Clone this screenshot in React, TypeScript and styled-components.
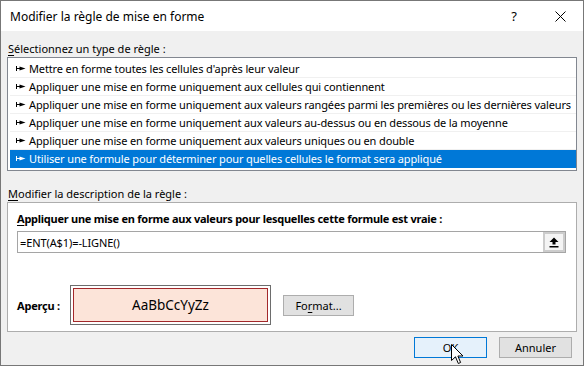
import styled, { createGlobalStyle } from "styled-components"

const rules = [
  "Mettre en forme toutes les cellules d'après leur valeur",
  "Appliquer une mise en forme uniquement aux cellules qui contiennent",
  "Appliquer une mise en forme uniquement aux valeurs rangées parmi les premières ou les dernières valeurs",
  "Appliquer une mise en forme uniquement aux valeurs au-dessus ou en dessous de la moyenne",
  "Appliquer une mise en forme uniquement aux valeurs uniques ou en double",
  "Utiliser une formule pour déterminer pour quelles cellules le format sera appliqué",
]

function RuleArrow() {
  return (
    <svg width="10" height="7" viewBox="0 0 10 7" fill="currentColor" style={{ flex: "none" }}>
      <rect x="0" y="1" width="1" height="5" />
      <rect x="1" y="3" width="4" height="1" />
      <polygon points="3.5,1.5 9.5,3.5 3.5,5.5" />
    </svg>
  )
}

function CloseIcon() {
  return (
    <svg width="11" height="11" viewBox="0 0 11 11" stroke="#000" strokeWidth="1">
      <line x1="0.5" y1="0.5" x2="10.5" y2="10.5" />
      <line x1="10.5" y1="0.5" x2="0.5" y2="10.5" />
    </svg>
  )
}

function CollapseIcon() {
  return (
    <svg width="10" height="11" viewBox="0 0 10 11" fill="#000">
      <polygon points="5,0.5 9.5,5 6.5,5 6.5,7.5 3.5,7.5 3.5,5 0.5,5" />
      <rect x="0.5" y="9" width="9" height="1.5" />
    </svg>
  )
}

function Cursor() {
  return (
    <svg width="13" height="21" viewBox="0 0 13 21">
      <path
        d="M0.5 0.5 L0.5 16.5 L4.5 12.8 L7.3 19.5 L9.6 18.5 L6.9 12 L12 12 Z"
        fill="#fff"
        stroke="#000"
        strokeWidth="1"
      />
    </svg>
  )
}

function App() {
  return (
    <>
      <GlobalStyle />
      <Window>
        <TitleBar>
          <Title>Modifier la règle de mise en forme</Title>
          <TitleButton>?</TitleButton>
          <TitleButton>
            <CloseIcon />
          </TitleButton>
        </TitleBar>

        <Body>
          <SectionLabel>
            <u>S</u>électionnez un type de règle :
          </SectionLabel>
          <RuleList>
            {rules.map((rule, i) => (
              <RuleRow key={rule} $selected={i === rules.length - 1}>
                <RuleArrow />
                <span>{rule}</span>
              </RuleRow>
            ))}
          </RuleList>

          <SectionLabel $gap={14}>
            <u>M</u>odifier la description de la règle :
          </SectionLabel>
          <DescriptionBox>
            <BoldLabel>
              <u>A</u>ppliquer une mise en forme aux valeurs pour lesquelles cette formule est vraie :
            </BoldLabel>
            <FormulaField>
              <FormulaText>=ENT(A$1)=-LIGNE()</FormulaText>
              <CollapseButton>
                <CollapseIcon />
              </CollapseButton>
            </FormulaField>
            <PreviewRow>
              <PreviewLabel>Aperçu :</PreviewLabel>
              <PreviewFrame>
                <PreviewSample>AaBbCcYyZz</PreviewSample>
              </PreviewFrame>
              <DialogButton $width={71}>
                Fo<u>r</u>mat...
              </DialogButton>
            </PreviewRow>
          </DescriptionBox>
        </Body>

        <Footer>
          <DialogButton $primary>OK</DialogButton>
          <DialogButton>Annuler</DialogButton>
        </Footer>

        <CursorLayer>
          <Cursor />
        </CursorLayer>
      </Window>
    </>
  )
}

const GlobalStyle = createGlobalStyle`
  html, body {
    margin: 0;
    padding: 0;
    background: #ffffff;
  }
  body {
    font-family: "Noto Sans", "Open Sans", sans-serif;
    font-size: 11px;
    color: #000;
  }
  u {
    text-decoration-thickness: 1px;
    text-underline-offset: 2px;
  }
`

const Window = styled.div`
  position: relative;
  width: 584px;
  height: 366px;
  box-sizing: border-box;
  border: 1px solid #777777;
  background: #f0f0f0;
  display: flex;
  flex-direction: column;
  overflow: hidden;
`

const TitleBar = styled.div`
  height: 30px;
  flex: none;
  background: #ffffff;
  display: flex;
  align-items: center;
  padding-left: 9px;
`

const Title = styled.div`
  flex: 1;
  font-size: 12px;
`

const TitleButton = styled.div`
  width: 46px;
  height: 30px;
  display: flex;
  align-items: center;
  justify-content: center;
  font-size: 13px;
`

const Body = styled.div`
  padding: 9px 6px 0 6px;
`

const SectionLabel = styled.div<{ $gap?: number }>`
  margin-top: ${(p) => p.$gap ?? 0}px;
  height: 17px;
  line-height: 17px;
  padding-left: 1px;
`

const RuleList = styled.div`
  background: #ffffff;
  border: 1px solid #828790;
  padding: 2px 0 2px 2px;
`

const RuleRow = styled.div<{ $selected?: boolean }>`
  height: 18px;
  box-sizing: border-box;
  display: flex;
  align-items: center;
  gap: 3px;
  padding-left: 6px;
  white-space: nowrap;
  overflow: hidden;
  letter-spacing: -0.13px;
  border-bottom: 1px solid ${(p) => (p.$selected ? "#0078d7" : "#f0f0f0")};
  background: ${(p) => (p.$selected ? "#0078d7" : "transparent")};
  color: ${(p) => (p.$selected ? "#ffffff" : "#000000")};
`

const DescriptionBox = styled.div`
  height: 130px;
  box-sizing: border-box;
  background: #ffffff;
  border: 1px solid #adadad;
  padding: 7px 10px 0 9px;
`

const BoldLabel = styled.div`
  font-weight: 700;
  height: 17px;
  line-height: 17px;
  white-space: nowrap;
  letter-spacing: -0.25px;
`

const FormulaField = styled.div`
  margin-top: 4px;
  height: 22px;
  box-sizing: border-box;
  border: 1px solid #a5a5a5;
  display: flex;
  align-items: center;
  padding-left: 2px;
`

const FormulaText = styled.span`
  flex: 1;
  letter-spacing: -0.1px;
`

const CollapseButton = styled.div`
  width: 22px;
  height: 20px;
  box-sizing: border-box;
  border: 2px solid #cccccc;
  background: #f4f4f4;
  display: flex;
  align-items: center;
  justify-content: center;
`

const PreviewRow = styled.div`
  margin-top: 32px;
  display: flex;
  align-items: center;
`

const PreviewLabel = styled.div`
  width: 53px;
  font-weight: 700;
  letter-spacing: -0.2px;
`

const PreviewFrame = styled.div`
  width: 201px;
  height: 40px;
  box-sizing: border-box;
  border: 1px solid #6d6d6d;
  padding: 2px;
  background: #ffffff;
`

const PreviewSample = styled.div`
  height: 100%;
  box-sizing: border-box;
  border: 1px solid #a3282b;
  background: #fce4d9;
  display: flex;
  align-items: center;
  justify-content: center;
  font-size: 13.5px;
`

const DialogButton = styled.div<{ $primary?: boolean; $width?: number }>`
  width: ${(p) => p.$width ?? 73}px;
  height: 21px;
  box-sizing: border-box;
  margin-left: ${(p) => (p.$width ? 12 : 0)}px;
  border: 1px solid ${(p) => (p.$primary ? "#0078d7" : "#adadad")};
  background: ${(p) => (p.$primary ? "#e5f1fb" : "#e1e1e1")};
  display: flex;
  align-items: center;
  justify-content: center;
`

const Footer = styled.div`
  display: flex;
  justify-content: flex-end;
  gap: 12px;
  padding: 5px 11px 0 0;
`

const CursorLayer = styled.div`
  position: absolute;
  left: 450px;
  top: 343px;
  pointer-events: none;
  line-height: 0;
`

export default App
